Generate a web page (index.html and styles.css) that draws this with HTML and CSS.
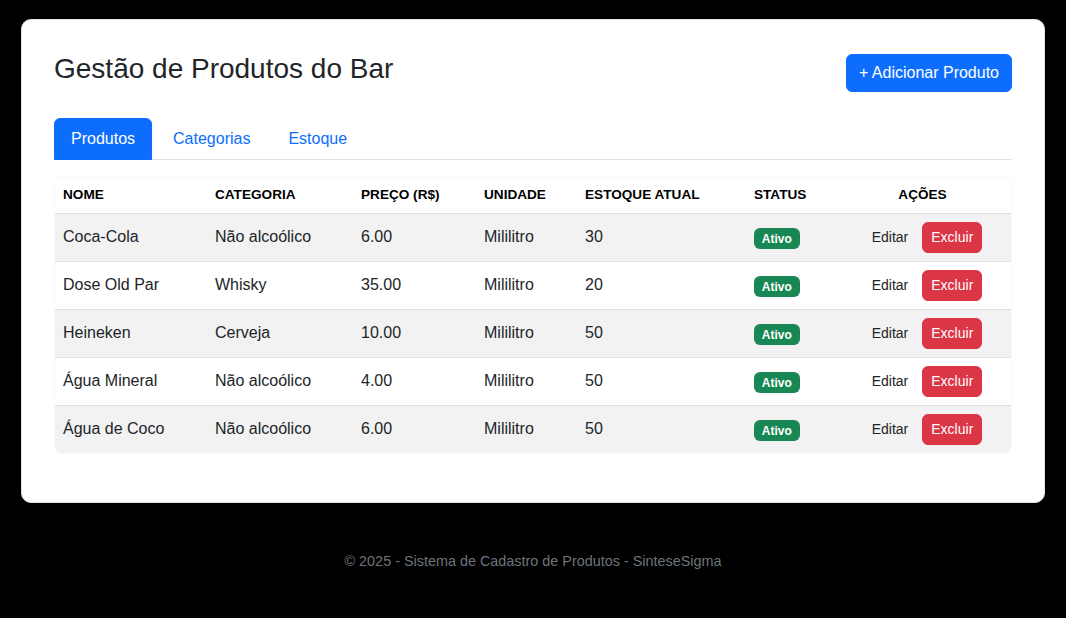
FILE: index.html
```html
<!DOCTYPE html>
<html lang="pt-BR">
<head>
<meta charset="utf-8">
<title>Gestão de Produtos do Bar</title>
<link rel="stylesheet" href="styles.css">
</head>
<body>
<main class="container">
  <section class="card">
    <div class="card-header">
      <h3 class="title">Gestão de Produtos do Bar</h3>
      <button class="btn btn-primary">+ Adicionar Produto</button>
    </div>
    <nav class="tabs">
      <a class="tab active">Produtos</a>
      <a class="tab">Categorias</a>
      <a class="tab">Estoque</a>
    </nav>
    <div class="table-wrap">
      <table class="table">
        <thead>
          <tr>
            <th class="c-nome">Nome</th>
            <th class="c-cat">Categoria</th>
            <th class="c-preco">Preço (R$)</th>
            <th class="c-un">Unidade</th>
            <th class="c-est">Estoque Atual</th>
            <th class="c-status">Status</th>
            <th class="c-acoes">Ações</th>
          </tr>
        </thead>
        <tbody>
          <tr>
            <td>Coca-Cola</td><td>Não alcoólico</td><td>6.00</td><td>Mililitro</td><td>30</td>
            <td><span class="badge">Ativo</span></td>
            <td class="acoes"><button class="btn-sm btn-edit">Editar</button><button class="btn-sm btn-danger">Excluir</button></td>
          </tr>
          <tr>
            <td>Dose Old Par</td><td>Whisky</td><td>35.00</td><td>Mililitro</td><td>20</td>
            <td><span class="badge">Ativo</span></td>
            <td class="acoes"><button class="btn-sm btn-edit">Editar</button><button class="btn-sm btn-danger">Excluir</button></td>
          </tr>
          <tr>
            <td>Heineken</td><td>Cerveja</td><td>10.00</td><td>Mililitro</td><td>50</td>
            <td><span class="badge">Ativo</span></td>
            <td class="acoes"><button class="btn-sm btn-edit">Editar</button><button class="btn-sm btn-danger">Excluir</button></td>
          </tr>
          <tr>
            <td>Água Mineral</td><td>Não alcoólico</td><td>4.00</td><td>Mililitro</td><td>50</td>
            <td><span class="badge">Ativo</span></td>
            <td class="acoes"><button class="btn-sm btn-edit">Editar</button><button class="btn-sm btn-danger">Excluir</button></td>
          </tr>
          <tr>
            <td>Água de Coco</td><td>Não alcoólico</td><td>6.00</td><td>Mililitro</td><td>50</td>
            <td><span class="badge">Ativo</span></td>
            <td class="acoes"><button class="btn-sm btn-edit">Editar</button><button class="btn-sm btn-danger">Excluir</button></td>
          </tr>
        </tbody>
      </table>
    </div>
  </section>
</main>
<footer class="footer">© 2025 - Sistema de Cadastro de Produtos - SinteseSigma</footer>
</body>
</html>
```

FILE: styles.css
```css
* { box-sizing: border-box; }

html, body {
  margin: 0;
  background: #000;
}

body {
  font-family: "Liberation Sans", Arial, sans-serif;
  font-size: 16px;
  line-height: 1.5;
  color: #212529;
  padding-top: 19px;
}

.container {
  width: 1024px;
  margin: 0 auto;
}

.card {
  background: #fff;
  border: 1px solid #dee2e6;
  border-radius: 10px;
  padding: 32px;
}

.card-header {
  display: flex;
  justify-content: space-between;
  align-items: center;
  margin-bottom: 24px;
}

.title {
  margin: 0 0 8px 0;
  font-size: 28px;
  font-weight: 400;
  line-height: 1.2;
  color: #212529;
}

.btn {
  font-family: inherit;
  font-size: 16px;
  line-height: 24px;
  padding: 6px 12px;
  border: 1px solid transparent;
  border-radius: 6px;
  cursor: pointer;
}

.btn-primary {
  background: #0d6efd;
  border-color: #0d6efd;
  color: #fff;
}

.tabs {
  display: flex;
  border-bottom: 1px solid #dee2e6;
}

.tab {
  display: block;
  padding: 8px 16px;
  margin-bottom: -1px;
  border: 1px solid transparent;
  border-radius: 6px 6px 0 0;
  color: #0d6efd;
  font-size: 16px;
  line-height: 24px;
  margin-right: 4px;
}

.tab.active {
  background: #0d6efd;
  border-color: #0d6efd;
  color: #fff;
}

.table-wrap {
  margin-top: 16px;
  margin-bottom: 16px;
  border: 1px solid #fafafa;
  border-radius: 8px;
  overflow: hidden;
}

.table {
  width: 100%;
  border-collapse: collapse;
  table-layout: fixed;
}

.table th {
  text-align: left;
  font-size: 13.6px;
  font-weight: 700;
  text-transform: uppercase;
  line-height: 20px;
  padding: 8px;
  color: #000;
  border-bottom: 1px solid #dee2e6;
}

.table td {
  padding: 8px;
  vertical-align: middle;
  line-height: 24px;
  border-bottom: 1px solid #dee2e6;
}

.table tbody tr:nth-child(odd) td {
  background: #f2f2f2;
}

.table tbody tr:last-child td {
  border-bottom: none;
}

.c-nome { width: 152px; }
.c-cat { width: 146px; }
.c-preco { width: 123px; }
.c-un { width: 101px; }
.c-est { width: 169px; }
.c-status { width: 88px; }
.table th.c-acoes { text-align: center; }

.badge {
  display: inline-block;
  background: #198754;
  color: #fff;
  font-size: 12px;
  font-weight: 700;
  line-height: 1;
  padding: 4.5px 7.8px;
  border-radius: 6px;
  vertical-align: middle;
  position: relative;
  top: 1px;
}

.acoes {
  text-align: center;
  white-space: nowrap;
}

.btn-sm {
  font-family: inherit;
  font-size: 14px;
  line-height: 21px;
  padding: 4px 8px;
  border: 1px solid transparent;
  border-radius: 6px;
  cursor: pointer;
  vertical-align: middle;
}

.btn-edit {
  background: transparent;
  color: #212529;
  margin-right: 5px;
}

.btn-danger {
  background: #dc3545;
  border-color: #dc3545;
  color: #fff;
}

.footer {
  text-align: center;
  color: #6c757d;
  font-size: 14.4px;
  line-height: 21px;
  margin-top: 48px;
}
```
